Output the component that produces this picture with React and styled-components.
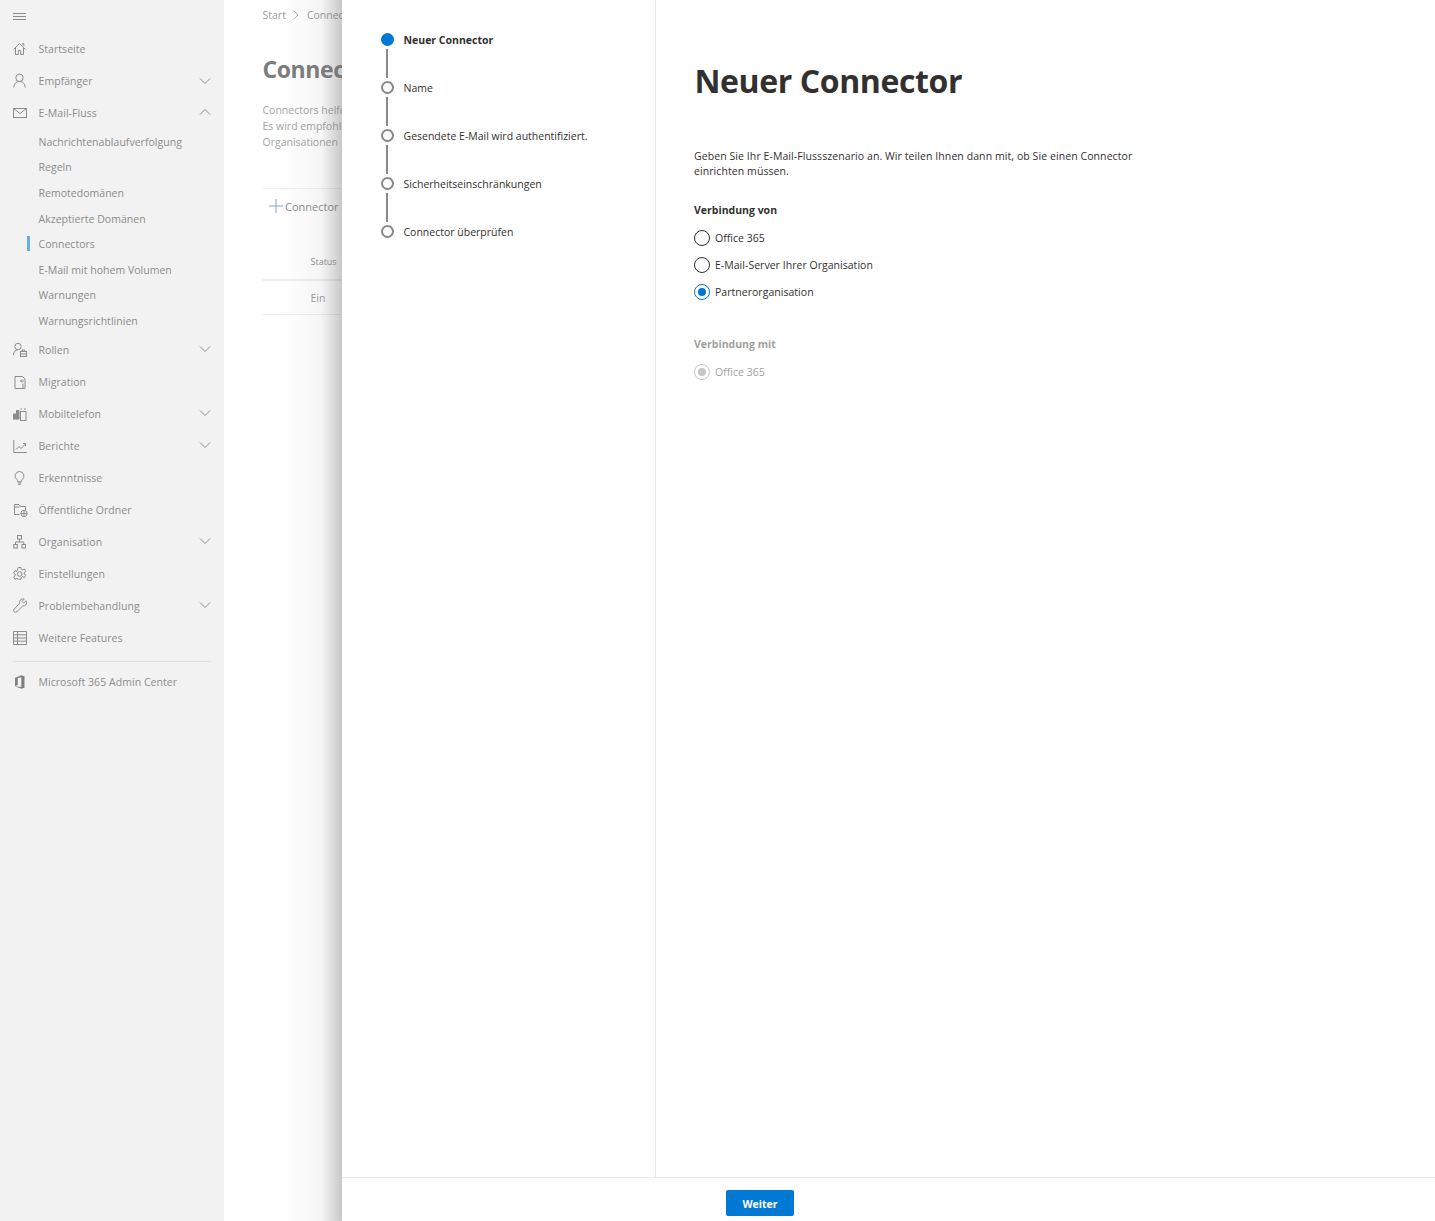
import React from "react";
import styled, { createGlobalStyle } from "styled-components";

const Global = createGlobalStyle`
  html, body { margin: 0; padding: 0; height: 1221px; overflow: hidden; background: #fff; }
  body { font-family: "Open Sans", "Noto Sans", "Liberation Sans", sans-serif; }
  * { box-sizing: border-box; }
`;

const Page = styled.div`
  position: relative;
  display: flex;
  width: 1435px;
  height: 1221px;
  overflow: hidden;
`;

const Sidebar = styled.nav`
  width: 224px;
  flex: none;
  background: #f2f2f2;
  padding-top: 1px;
  color: #8c8c8c;
`;

const Burger = styled.div`
  height: 32px;
  padding-left: 13px;
  display: flex;
  align-items: center;
`;

const NavRow = styled.div`
  height: 32px;
  display: flex;
  align-items: center;
  padding-left: 12.5px;
  font-size: 10.5px;
  letter-spacing: 0.05px;
`;

const IconSlot = styled.span`
  width: 26px;
  flex: none;
  display: flex;
  align-items: center;
`;

const Chevron = styled.span`
  margin-left: auto;
  margin-right: 13px;
  display: flex;
  position: relative;
  top: ${(p) => p.$nudge}px;
`;

const SubRow = styled.div`
  position: relative;
  height: 25.6px;
  padding-left: 38.5px;
  display: flex;
  align-items: center;
  font-size: 10.5px;
  letter-spacing: 0.03px;
`;

const ActiveMark = styled.span`
  position: absolute;
  left: 27px;
  top: 5px;
  width: 3px;
  height: 15px;
  background: #66aeea;
`;

const SubList = styled.div`
  margin: 0;
`;

const NavDivider = styled.div`
  height: 1px;
  background: #dfdfdf;
  margin: 7px 13px 4px;
`;

const Behind = styled.main`
  flex: 1;
  padding: 7px 0 0 38.5px;
  color: #9a9a9a;
  white-space: nowrap;
  overflow: hidden;
`;

const Crumbs = styled.div`
  display: flex;
  align-items: center;
  gap: 7.5px;
  height: 15px;
  font-size: 10.5px;
`;

const BehindTitle = styled.h1`
  margin: 30px 0 0;
  font-size: 23px;
  line-height: 34px;
  font-weight: 700;
  letter-spacing: -0.4px;
  color: #7c7c7c;
`;

const BehindText = styled.p`
  margin: 16px 0 0;
  font-size: 10.5px;
  line-height: 16px;
  color: #a3a3a3;
`;

const BehindRule = styled.div`
  height: ${(p) => p.$h || 1}px;
  background: #ececec;
  margin-top: ${(p) => p.$top}px;
`;

const AddRow = styled.div`
  display: flex;
  align-items: center;
  height: 34px;
  padding-left: 6.5px;
  gap: 2px;
  font-size: 11px;
  color: #8a8a8a;
`;

const TableCell = styled.div`
  padding-left: 48px;
  font-size: ${(p) => p.$size}px;
  line-height: 16px;
  margin-top: ${(p) => p.$top}px;
  color: ${(p) => p.$color};
`;

const Shade = styled.div`
  position: absolute;
  left: 282px;
  top: 0;
  width: 60px;
  height: 100%;
  background: linear-gradient(to right, rgba(120,120,120,0), rgba(120,120,120,0.07) 65%, rgba(110,110,110,0.38));
`;

const Panel = styled.section`
  position: absolute;
  left: 342px;
  top: 0;
  width: 1093px;
  height: 1221px;
  background: #fff;
  display: flex;
  flex-direction: column;
`;

const PanelBody = styled.div`
  flex: 1;
  display: flex;
  min-height: 0;
`;

const Stepper = styled.ol`
  width: 314px;
  flex: none;
  margin: 0;
  padding: 32px 0 0 39px;
  list-style: none;
  border-right: 1px solid #ebebeb;
`;

const Step = styled.li`
  display: flex;
  gap: 9.5px;
  height: 48px;
  position: relative;
`;

const StepDot = styled.span`
  width: 13px;
  height: 13px;
  margin-top: 1px;
  flex: none;
  border-radius: 50%;
  border: 2px solid ${(p) => (p.$active ? "#0078d4" : "#8a8886")};
  background: ${(p) => (p.$active ? "#0078d4" : "#fff")};
`;

const StepLine = styled.span`
  position: absolute;
  left: 5px;
  top: 17px;
  width: 2px;
  height: 29px;
  background: #8a8886;
`;

const StepLabel = styled.span`
  margin-top: 1px;
  font-size: 10.5px;
  line-height: 15px;
  font-weight: ${(p) => (p.$active ? 700 : 400)};
  color: #323130;
`;

const Content = styled.div`
  flex: 1;
  padding: 58px 0 0 38px;
  color: #323130;
`;

const Title = styled.h2`
  margin: 0 0 0 0.5px;
  font-size: 32px;
  line-height: 46px;
  font-weight: 700;
  letter-spacing: -0.4px;
`;

const Intro = styled.p`
  margin: 45px 0 0;
  width: 450px;
  font-size: 10.5px;
  line-height: 15px;
  letter-spacing: 0.08px;
`;

const GroupLabel = styled.div`
  margin-top: ${(p) => p.$top}px;
  font-size: 10.5px;
  line-height: 15px;
  font-weight: 700;
  color: ${(p) => (p.$disabled ? "#a19f9d" : "#323130")};
`;

const RadioRow = styled.label`
  display: flex;
  align-items: center;
  gap: 5px;
  height: 16px;
  margin-top: ${(p) => p.$top}px;
  font-size: 10.5px;
  letter-spacing: 0.03px;
  color: ${(p) => (p.$disabled ? "#a19f9d" : "#323130")};
`;

const Circle = styled.span`
  position: relative;
  width: 16px;
  height: 16px;
  flex: none;
  border-radius: 50%;
  border: 1px solid ${(p) => (p.$state === "on" ? "#0078d4" : p.$state === "off" ? "#c8c6c4" : "#323130")};
  &::after {
    content: "";
    display: ${(p) => (p.$state === "none" ? "none" : "block")};
    position: absolute;
    left: 3px;
    top: 3px;
    width: 8px;
    height: 8px;
    border-radius: 50%;
    background: ${(p) => (p.$state === "on" ? "#0078d4" : "#c8c6c4")};
  }
`;

const Footer = styled.footer`
  height: 44px;
  flex: none;
  border-top: 1px solid #ebebeb;
  padding: 12px 0 0 384px;
`;

const NextButton = styled.button`
  width: 68px;
  height: 26px;
  border: none;
  border-radius: 2px;
  padding: 1px 0 0;
  background: #0078d4;
  color: #fff;
  font-family: inherit;
  font-size: 10.5px;
  font-weight: 700;
`;

const Ico = ({ children }) => (
  <svg width="16" height="16" viewBox="0 0 16 16" fill="none" stroke="#8c8c8c" strokeWidth="1">
    {children}
  </svg>
);

const icons = {
  home: <path d="M.5 8.5 6.5 2.5l6 6M2.5 6.5v7h2.8V9.5h2.4v4h2.8v-7M9.5 3.5V2.5h1.3v2.3" />,
  person: <><circle cx="6.5" cy="4.8" r="3.7" /><path d="M.8 14.5c0-3.5 2.5-6 5.7-6s5.7 2.5 5.7 6" /></>,
  mail: <><rect x="0.5" y="3.5" width="13" height="9" /><path d="M.5 3.5 7 8.5l6.5-5" /></>,
  roles: <><circle cx="5" cy="4.5" r="3.2" /><path d="M.5 13c0-3.2 2-5.2 4.5-5.2" /><rect x="7.5" y="9.5" width="6" height="5" /><path d="M9.2 9.5V8h2.6v1.5M7.5 12h6" /></>,
  migration: <path d="M2 2.5h7.5l2.5 2.5v9.5H2zM11 7H7.5M9 5.5 7.5 7 9 8.5M10 9.5v5" />,
  mobile: <><rect x="0.5" y="8" width="2.5" height="5" fill="#8c8c8c" /><rect x="3.5" y="4.5" width="2.5" height="8.5" fill="#8c8c8c" /><rect x="7.5" y="5.5" width="5.5" height="9" /><path d="M7.5 3h1.5M11 3h2" /></>,
  reports: <path d="M.8 2v12.5h13M3 11.5l3-3 2 2 4.5-4.5M10 5.5h2.5V8" />,
  bulb: <path d="M6.5 1.5a4.5 4.5 0 0 0-2.5 8.2c.5.5.6 1.2.6 2h3.8c0-.8.1-1.5.6-2a4.5 4.5 0 0 0-2.5-8.2zM4.8 13h3.4M5.3 14.5h2.4" />,
  folder: <><path d="M6.5 12.5H1.5v-10h4.5l1.5 2h5V8" /><path d="M1.5 5h5" /><circle cx="11" cy="11.5" r="3.2" fill="#f2f2f2" /><path d="M7.8 11.5h6.4M11 8.3v6.4" /></>,
  org: <><rect x="4.5" y="1.5" width="4" height="3.5" /><rect x=".8" y="10.5" width="3.5" height="3.5" /><rect x="9" y="10.5" width="3.5" height="3.5" /><path d="M6.5 5v3M2.5 10.5V8h8.3v2.5" /></>,
  gear: <><circle cx="6.7" cy="8" r="2.3" /><path d="M5.3 1.5h2.8l.3 1.9 1.3.6 1.7-1 1.4 2.4-1.6 1.2v1.5l1.6 1.2-1.4 2.4-1.7-1-1.3.6-.3 1.9H5.3L5 12.9l-1.3-.6-1.7 1-1.4-2.4 1.6-1.2V8.2L.6 7 2 4.6l1.7 1z" /></>,
  wrench: <path d="M13 2.8 10.6 5 9 3.4 11.2 1a3.5 3.5 0 0 0-4.5 4.4L1.2 11a1.9 1.9 0 0 0 2.7 2.7l5.6-5.6A3.5 3.5 0 0 0 13 2.8z" />,
  grid: <path d="M.5 1.5h13v13H.5zM.5 4.8h13M.5 8h13M.5 11.2h13M4.5 1.5v13" />,
  office: <path d="M2 3.8 8.3 1.2l3.2 1v11.6l-3.2 1L2 12.2zM2 12.2l6.3.9V3.2L4.8 4v7z" fill="#808080" stroke="none" />,
};

const ChevronIcon = ({ up, nudge }) => (
  <Chevron $nudge={nudge}>
    <svg width="12" height="8" viewBox="0 0 12 8" fill="none" stroke="#8c8c8c" strokeWidth="1">
      <path d={up ? "M1 6.5 6 1.5l5 5" : "M1 1.5l5 5 5-5"} />
    </svg>
  </Chevron>
);

const Nav = ({ icon, label, chev, nudge = 0 }) => (
  <NavRow>
    <IconSlot><Ico>{icons[icon]}</Ico></IconSlot>
    {label}
    {chev && <ChevronIcon up={chev === "up"} nudge={nudge} />}
  </NavRow>
);

const subs = ["Nachrichtenablaufverfolgung", "Regeln", "Remotedomänen", "Akzeptierte Domänen", "Connectors", "E-Mail mit hohem Volumen", "Warnungen", "Warnungsrichtlinien"];
const lower = [
  ["roles", "Rollen", "down"],
  ["migration", "Migration"],
  ["mobile", "Mobiltelefon", "down"],
  ["reports", "Berichte", "down"],
  ["bulb", "Erkenntnisse"],
  ["folder", "Öffentliche Ordner"],
  ["org", "Organisation", "down"],
  ["gear", "Einstellungen"],
  ["wrench", "Problembehandlung", "down"],
  ["grid", "Weitere Features"],
];
const steps = ["Neuer Connector", "Name", "Gesendete E-Mail wird authentifiziert.", "Sicherheitseinschränkungen", "Connector überprüfen"];

export default function App() {
  return (
    <Page>
      <Global />
      <Sidebar>
        <Burger>
          <svg width="14" height="8" viewBox="0 0 14 8" stroke="#8c8c8c" strokeWidth="1"><path d="M0 .5h13M0 3.5h13M0 6.5h13" /></svg>
        </Burger>
        <Nav icon="home" label="Startseite" />
        <Nav icon="person" label="Empfänger" chev="down" />
        <Nav icon="mail" label="E-Mail-Fluss" chev="up" nudge={-1} />
        <SubList>
          {subs.map((s) => (
            <SubRow key={s}>
              {s === "Connectors" && <ActiveMark />}
              {s}
            </SubRow>
          ))}
        </SubList>
        {lower.map(([i, l, c]) => <Nav key={l} icon={i} label={l} chev={c} nudge={-1} />)}
        <NavDivider />
        <Nav icon="office" label="Microsoft 365 Admin Center" />
      </Sidebar>
      <Behind>
        <Crumbs>
          Start
          <svg width="6" height="10" viewBox="0 0 6 10" fill="none" stroke="#b5b5b5"><path d="M1 1l4 4-4 4" /></svg>
          Connectors
        </Crumbs>
        <BehindTitle>Connectors</BehindTitle>
        <BehindText>
          Connectors helfen<br />Es wird empfohlen<br />Organisationen
        </BehindText>
        <BehindRule $top={38} />
        <AddRow>
          <svg width="14" height="14" viewBox="0 0 14 14" stroke="#7fa7cf"><path d="M7 0v14M0 7h14" /></svg>
          Connector hinzufügen
        </AddRow>
        <TableCell $size={9} $top={31} $color="#8c8c8c">Status</TableCell>
        <BehindRule $top={9} $h={2} />
        <TableCell $size={10.5} $top={9} $color="#9a9aa8">Ein</TableCell>
        <BehindRule $top={8} />
      </Behind>
      <Shade />
      <Panel>
        <PanelBody>
          <Stepper>
            {steps.map((s, i) => (
              <Step key={s}>
                <StepDot $active={i === 0} />
                {i < steps.length - 1 && <StepLine />}
                <StepLabel $active={i === 0}>{s}</StepLabel>
              </Step>
            ))}
          </Stepper>
          <Content>
            <Title>Neuer Connector</Title>
            <Intro>Geben Sie Ihr E-Mail-Flussszenario an. Wir teilen Ihnen dann mit, ob Sie einen Connector einrichten müssen.</Intro>
            <GroupLabel $top={24}>Verbindung von</GroupLabel>
            <RadioRow $top={12}><Circle $state="none" />Office 365</RadioRow>
            <RadioRow $top={11}><Circle $state="none" />E-Mail-Server Ihrer Organisation</RadioRow>
            <RadioRow $top={11}><Circle $state="on" />Partnerorganisation</RadioRow>
            <GroupLabel $top={37} $disabled>Verbindung mit</GroupLabel>
            <RadioRow $top={12} $disabled><Circle $state="off" />Office 365</RadioRow>
          </Content>
        </PanelBody>
        <Footer><NextButton>Weiter</NextButton></Footer>
      </Panel>
    </Page>
  );
}
